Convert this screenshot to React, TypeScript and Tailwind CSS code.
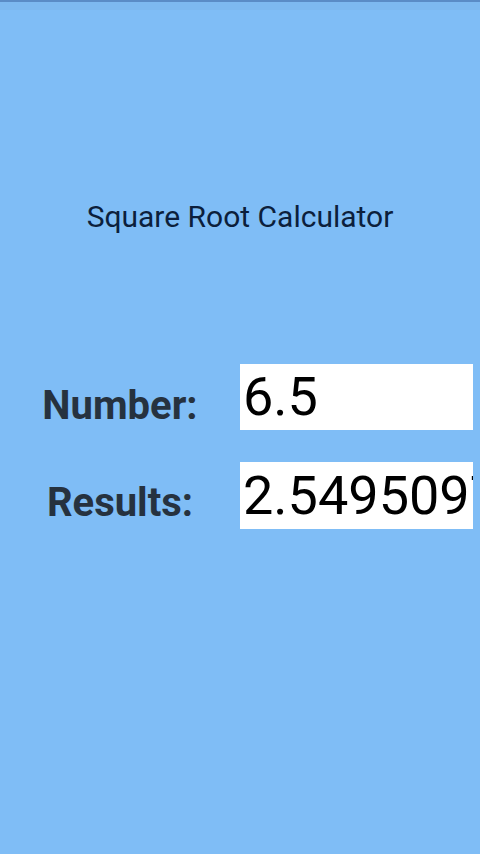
import { useState } from "react";

export default function App() {
    const [value, setValue] = useState("6.5");
    const n = parseFloat(value);
    const result = isNaN(n) ? "" : String(Math.sqrt(n));

    return (
        <div className="w-[480px] h-[854px] bg-[#7fbdf6] flex flex-col overflow-hidden" style={{ fontFamily: "Roboto, sans-serif" }}>
            {/* status strip */}
            <div className="h-[2px] bg-[#5a8cc6]" />
            <div className="h-[8px] bg-[#7db9f0]" />

            {/* Title */}
            <h1 className="mt-[189px] text-center text-[30px] leading-[36px] text-[#0c1f3c]">Square Root Calculator</h1>

            {/* Form */}
            <div className="mt-[129px] flex flex-col gap-[32px]">
                <div className="flex items-start h-[66px]">
                    <span className="w-[240px] text-center text-[40px] leading-[40px] font-bold text-[#26323f] pt-[22px]">Number:</span>
                    <input
                        value={value}
                        onChange={(e) => setValue(e.target.value)}
                        className="w-[233px] h-[66px] bg-white pl-[3px] text-[54px] leading-[66px] text-black outline-none"
                    />
                </div>
                <div className="flex items-start h-[67px]">
                    <span className="w-[240px] text-center text-[40px] leading-[40px] font-bold text-[#26323f] pt-[21px]">Results:</span>
                    <div className="w-[233px] h-[67px] bg-white pl-[3px] text-[54px] leading-[67px] text-black overflow-hidden whitespace-nowrap">
                        {result}
                    </div>
                </div>
            </div>
        </div>
    );
}
